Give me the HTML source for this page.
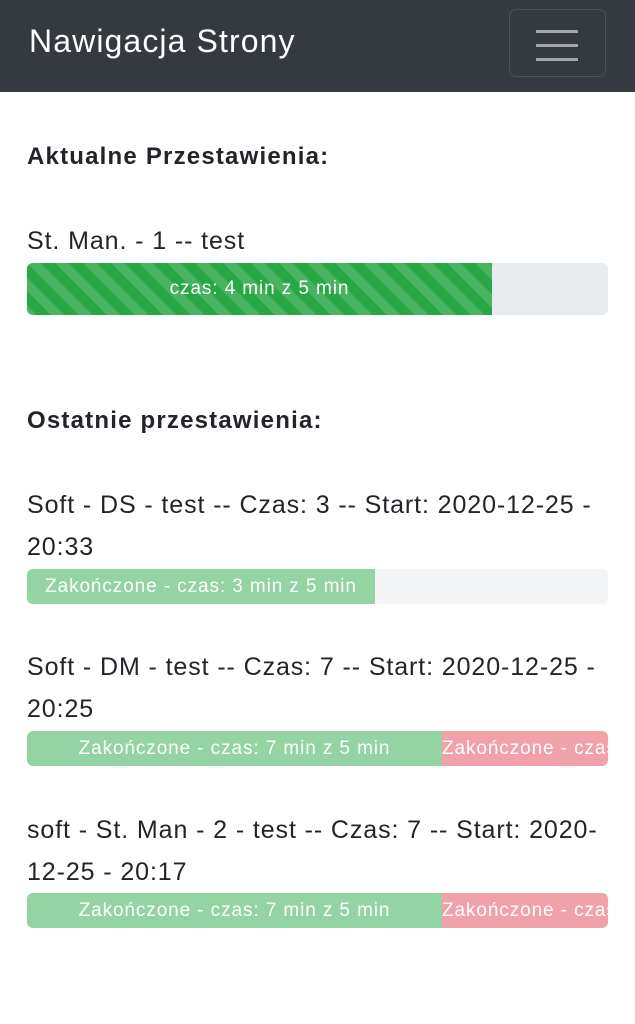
<!DOCTYPE html>
<html><head><meta charset="utf-8"><style>
*{margin:0;padding:0;box-sizing:border-box}
body{width:635px;height:1024px;background:#fff;font-family:"Liberation Sans",sans-serif;color:#212529;position:relative;overflow:hidden}
.nav{position:absolute;left:0;top:0;width:635px;height:92px;background:#343a40}
.brand{position:absolute;left:29px;top:23px;font-size:32px;letter-spacing:1.1px;color:#fff;white-space:nowrap}
.tog{position:absolute;left:509px;top:9px;width:97px;height:68px;border:1.5px solid rgba(255,255,255,.12);border-radius:7px}
.tog i{position:absolute;left:26px;width:42px;height:3px;background:rgba(255,255,255,.55)}
.t{position:absolute;left:27px;font-size:25px;letter-spacing:0.9px;white-space:nowrap;line-height:42px}
.b{font-weight:bold;font-size:24px;letter-spacing:1.2px}
.bar{position:absolute;left:27px;width:581px;border-radius:6px;overflow:hidden;display:flex}
.bar div{color:#fff;white-space:nowrap;overflow:hidden;font-size:19px;letter-spacing:0.9px;flex-shrink:0}
</style></head><body>
<div class="nav"><div class="brand">Nawigacja Strony</div>
<div class="tog"><i style="top:20px"></i><i style="top:34px"></i><i style="top:48px"></i></div></div>

<div class="t b" style="top:136px">Aktualne Przestawienia:</div>
<div class="t" style="top:220px">St. Man. - 1 -- test</div>
<div class="bar" style="top:263px;height:52px;background:#e9ecef">
<div style="width:465px;line-height:52px;text-align:center;background-color:#28a745;background-image:linear-gradient(45deg,rgba(255,255,255,.15) 25%,transparent 25%,transparent 50%,rgba(255,255,255,.15) 50%,rgba(255,255,255,.15) 75%,transparent 75%,transparent);background-size:28px 28px">czas: 4 min z 5 min</div></div>

<div class="t b" style="top:400px">Ostatnie przestawienia:</div>

<div class="t" style="top:484px">Soft - DS - test -- Czas: 3 -- Start: 2020-12-25 -<br>20:33</div>
<div class="bar" style="top:569px;height:35px;background:#f4f5f7">
<div style="width:348px;line-height:35px;text-align:center;background:#94d3a2">Zakończone - czas: 3 min z 5 min</div></div>

<div class="t" style="top:646px">Soft - DM - test -- Czas: 7 -- Start: 2020-12-25 -<br>20:25</div>
<div class="bar" style="top:731px;height:35px">
<div style="width:415px;line-height:35px;text-align:center;background:#94d3a2">Zakończone - czas: 7 min z 5 min</div>
<div style="width:166px;line-height:35px;background:#f1a1a8">Zakończone - czas</div></div>

<div class="t" style="top:809px">soft - St. Man - 2 - test -- Czas: 7 -- Start: 2020-<br>12-25 - 20:17</div>
<div class="bar" style="top:893px;height:35px">
<div style="width:415px;line-height:35px;text-align:center;background:#94d3a2">Zakończone - czas: 7 min z 5 min</div>
<div style="width:166px;line-height:35px;background:#f1a1a8">Zakończone - czas</div></div>
</body></html>
